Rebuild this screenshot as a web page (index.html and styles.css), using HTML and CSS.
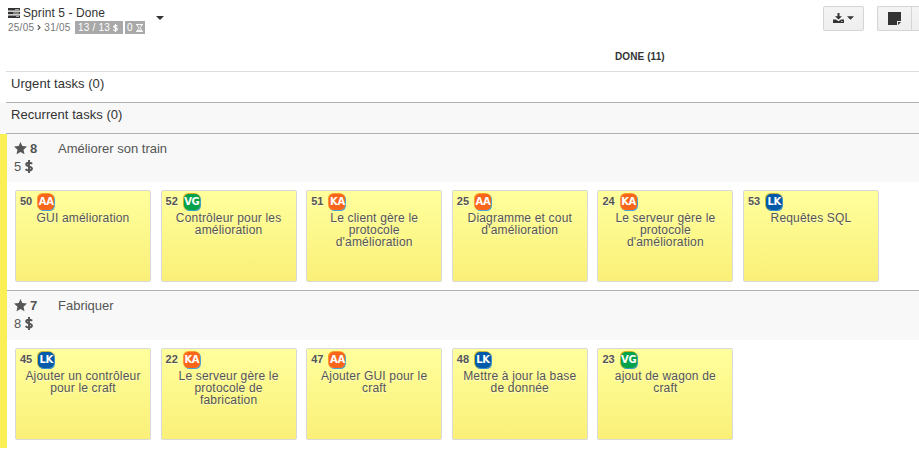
FILE: index.html
```html
<!DOCTYPE html>
<html lang="fr">
<head>
<meta charset="utf-8">
<title>Sprint 5</title>
<link rel="stylesheet" href="styles.css">
</head>
<body>
<svg class="defs" width="0" height="0">
  <symbol id="star" viewBox="0 0 13 13"><path d="M6.500 0 8.300 4.100 13 4.600 9.500 7.700 10.500 12.300 6.500 9.900 2.500 12.300 3.500 7.700 0 4.600 4.700 4.100z"/></symbol>
  <symbol id="dollar" viewBox="0 0 8 13"><path d="M4 0v13M7.200 3.700C5.600 2.300 1.200 2.100 1.200 4.300c0 2.300 5.700 1.800 5.700 4.200 0 2.500-4.800 2.300-6.400.7" fill="none" stroke="currentColor" stroke-width="2"/></symbol>
</svg>
<header class="top">
  <div class="sprint">
    <div class="title"><svg class="tasks" width="12" height="10" viewBox="0 0 12 10"><path d="M0 0h12v2.600H0zM0 3.700h12v2.600H0zM0 7.400h12V10H0z"/><path d="M7 1h4v.8H7zM5 4.600h6v.8H5zM8 8.300h3v.8H8z" fill="#ccc"/></svg><span>Sprint 5 - Done</span></div>
    <div class="dates"><span class="range">25/05 <svg width="4" height="7" viewBox="0 0 5 7"><path d="M1 .7 3.800 3.500 1 6.300" fill="none" stroke="#555" stroke-width="1.400"/></svg> 31/05</span><span class="tag pts">13 / 13 <svg width="5" height="8"><use href="#dollar"/></svg></span><span class="tag time">0 <svg width="7" height="8" viewBox="0 0 7 8"><path d="M0 .6h7M0 7.400h7M1.200 1c0 2 1.800 2 1.800 3S1.200 5 1.200 7M5.800 1c0 2-1.800 2-1.800 3s1.800 1 1.800 3M2 6.400h3" fill="none" stroke="#fff"/></svg></span></div>
  </div>
  <svg class="caret" width="8" height="4" viewBox="0 0 8 4"><path d="M0 0h8L4 4z"/></svg>
  <div class="tools">
    <div class="btn download"><svg width="11" height="10" viewBox="0 0 11 10"><path d="M4.500 0h2v3.200h2.500L5.500 6.600 2 3.200h2.500zM0 6.600h2.900l2.600 1.600 2.600-1.600H11V10H0z"/><path d="M8 8.300h1.500v.8H8z" fill="#eee"/></svg><svg width="7" height="4" viewBox="0 0 8 4"><path d="M0 0h8L4 4z"/></svg></div>
    <div class="btn note"><svg width="13" height="13" viewBox="0 0 13 13"><path d="M0 0h13v9H9v4H0zM10 10h3l-3 3z"/></svg></div>
    <div class="btn next"></div>
  </div>
</header>
<div class="column-head">DONE (11)</div>
<div class="lane">Urgent tasks (0)</div>
<div class="lane recurrent">Recurrent tasks (0)</div>

<section class="story">
  <div class="story-head">
    <div class="effort"><svg width="13" height="13"><use href="#star"/></svg><b>8</b></div><div class="name">Améliorer son train</div>
    <div class="value">5 <svg width="8" height="13"><use href="#dollar"/></svg></div>
  </div>
  <div class="cards">
    <article class="card"><div class="meta"><b>50</b><i class="avatar orange">AA</i></div><p>GUI amélioration</p></article>
    <article class="card"><div class="meta"><b>52</b><i class="avatar green">VG</i></div><p>Contrôleur pour les<br>amélioration</p></article>
    <article class="card"><div class="meta"><b>51</b><i class="avatar orange">KA</i></div><p>Le client gère le<br>protocole<br>d'amélioration</p></article>
    <article class="card"><div class="meta"><b>25</b><i class="avatar orange">AA</i></div><p>Diagramme et cout<br>d'amélioration</p></article>
    <article class="card"><div class="meta"><b>24</b><i class="avatar orange">KA</i></div><p>Le serveur gère le<br>protocole<br>d'amélioration</p></article>
    <article class="card"><div class="meta"><b>53</b><i class="avatar blue">LK</i></div><p>Requêtes SQL</p></article>
  </div>
</section>
<section class="story">
  <div class="story-head">
    <div class="effort"><svg width="13" height="13"><use href="#star"/></svg><b>7</b></div><div class="name">Fabriquer</div>
    <div class="value">8 <svg width="8" height="13"><use href="#dollar"/></svg></div>
  </div>
  <div class="cards">
    <article class="card"><div class="meta"><b>45</b><i class="avatar blue">LK</i></div><p>Ajouter un contrôleur<br>pour le craft</p></article>
    <article class="card"><div class="meta"><b>22</b><i class="avatar orange">KA</i></div><p>Le serveur gère le<br>protocole de<br>fabrication</p></article>
    <article class="card"><div class="meta"><b>47</b><i class="avatar orange">AA</i></div><p>Ajouter GUI pour le<br>craft</p></article>
    <article class="card"><div class="meta"><b>48</b><i class="avatar blue">LK</i></div><p>Mettre à jour la base<br>de donnée</p></article>
    <article class="card"><div class="meta"><b>23</b><i class="avatar green">VG</i></div><p>ajout de wagon de<br>craft</p></article>
  </div>
</section>
</body>
</html>
```
FILE: styles.css
```css
* { box-sizing: border-box; }
body { margin: 0; height: 459px; overflow: hidden; background: #fff; color: #333; font: 13px/18px "Liberation Sans", Arial, sans-serif; }
svg { fill: currentColor; flex: none; }
.defs { display: block; height: 0; }
.top { display: flex; height: 45px; padding: 6px 0 0 8px; }
.sprint { width: 148px; }
.title { display: flex; align-items: center; height: 14px; font-size: 12px; letter-spacing: .08px; white-space: nowrap; }
.title svg { margin-right: 3px; }
.dates { display: flex; height: 14px; margin-top: 1px; font-size: 10px; line-height: 14px; color: #777; white-space: nowrap; }
.range { width: 67px; letter-spacing: .25px; }
.tag { height: 13px; background: #a9a9a9; color: #fff; padding-left: 3px; }
.tag svg { vertical-align: -1px; }
.pts { width: 48px; margin-right: 2px; letter-spacing: .2px; }
.time { width: 20px; padding-left: 2px; letter-spacing: .3px; }
.caret { margin-top: 10px; }
.tools { display: flex; margin-left: auto; }
.btn { display: flex; align-items: center; justify-content: center; height: 25px; border: 1px solid #d5d5d5; background: linear-gradient(#f4f4f4, #eee); }
.download { width: 41px; margin-right: 13px; padding-bottom: 1px; gap: 3px; border-radius: 2px; }
.note { width: 34px; border-radius: 2px 0 0 2px; border-right: 0; }
.next { width: 8px; border-right: 0; }
.column-head { height: 27px; margin-left: 6px; padding-left: 609px; border-bottom: 1px solid #ddd; font-size: 10px; font-weight: bold; letter-spacing: .1px; line-height: 23px; }
.lane { height: 31px; margin-left: 6px; padding-left: 5px; border-bottom: 1px solid #b0b0b0; line-height: 23px; letter-spacing: .05px; }
.recurrent { background: #f8f8f8; box-shadow: -6px 0 #f8f8f8; }
.story { height: 157px; border-left: 7px solid #faef55; color: #555; }
.story-head { display: grid; grid-template-columns: 44px 1fr; grid-template-rows: 18px 18px; height: 48px; padding: 6px 0 0 7px; background: #f8f8f8; }
.effort { display: flex; align-items: center; gap: 3px; }
.effort svg { margin-top: -2px; }
.value { display: flex; align-items: center; gap: 4px; }
.value svg { margin-top: -2px; }
.cards { display: flex; gap: 9.600px; height: 109px; padding: 8px 0 0 8px; border-bottom: 1px solid #b0b0b0; }
.story:last-child .cards { border: 0; }
.story + .story .story-head { height: 49px; }
.card { width: 136px; height: 92px; flex: none; border: 1px solid #d9d9d9; border-radius: 2px; background: linear-gradient(#ffff9d, #faf078); text-shadow: 0 1px 0 #fff8; }
.meta { display: flex; height: 21px; padding: 3px 0 0 4px; font-size: 11px; line-height: 15px; }
.avatar { width: 16px; height: 16px; margin: 0 0 0 6px; border-radius: 5px; color: #fff; font: bold 10px/16px "DejaVu Sans", sans-serif; letter-spacing: -.3px; text-align: center; text-shadow: none; }
.orange { background: #f9661b; box-shadow: -.5px -.5px 0 .5px #ff9b28, .5px .5px 0 .5px #4aa3d8; }
.green { background: #00a34a; box-shadow: -.5px -.5px 0 .5px #d0b020, .5px .5px 0 .5px #36a0c0; }
.blue { background: #005aa9; box-shadow: -.5px -.5px 0 .5px #c8b43c, .5px .5px 0 .5px #3a8fd0; }
.card p { margin: 0; font-size: 12px; line-height: 12px; letter-spacing: .18px; text-align: center; white-space: nowrap; }
```
